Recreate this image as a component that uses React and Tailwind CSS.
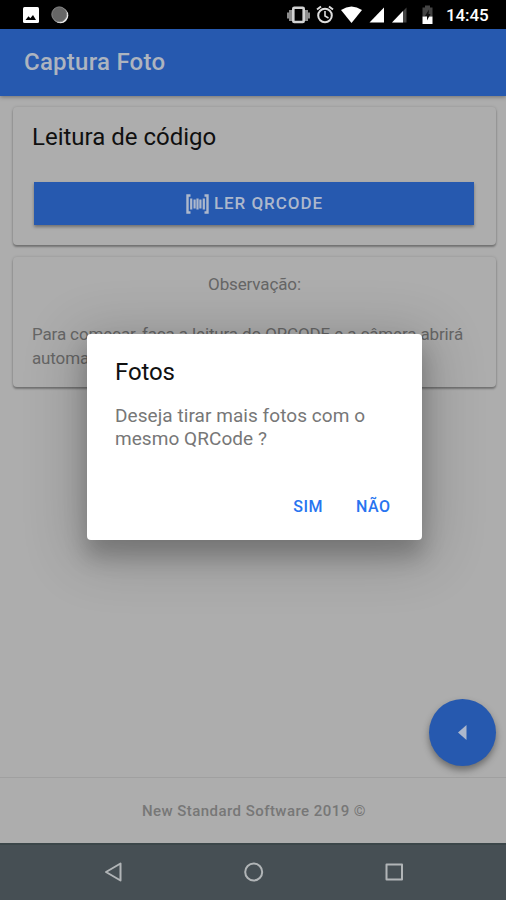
function StatusBar() {
  return (
    <div className="flex h-[29px] shrink-0 items-center bg-black pl-[23px] pr-[17px] text-white">
      <svg className="h-4 w-4" viewBox="0 0 16 16">
        <rect width="16" height="16" rx="1.5" fill="#fff" />
        <path d="M2.5 13 5.5 9.2 7.3 11.2 10 8 13 13Z" fill="#000" />
      </svg>
      <svg className="ml-3 h-[18px] w-[18px]" viewBox="0 0 18 18">
        <circle cx="9.5" cy="9.5" r="7.8" fill="#eee" />
        <circle cx="8.3" cy="8.4" r="7.5" fill="#666" stroke="#888" />
      </svg>
      <svg className="ml-auto h-[29px] w-[146px]" viewBox="0 0 146 29">
        <path d="M0 12.500h2v-2.500h4v11H2v-2.500H0ZM23 12.500h-2v-2.500h-4v11H21v-2.500h2Z" fill="#8c8c8c" />
        <rect x="6.3" y="7.800" width="10.400" height="14.200" rx="1" fill="none" stroke="#d2d2d2" strokeWidth="2.600" />
        <g fill="none" stroke="#dedede" strokeWidth="2">
          <circle cx="38" cy="15.500" r="6.800" />
          <path d="m30 9.500 4-3M46 9.500l-4-3" />
          <path d="M38 11v5l3.500 2" strokeWidth="1.600" />
        </g>
        <path d="M54 10Q64.500 3 75 10L64.500 23Z" fill="#fff" />
        <path d="M97 7.500V22.500H82.500Z" fill="#fff" />
        <path d="M119.500 7.500V22.500H105Z" fill="#444" />
        <path d="M116 11V22.500H105Z" fill="#fff" />
        <path d="M138 5.500h5v2h2.500v9h-10v-9H138Z" fill="#444" />
        <path d="M135.500 16.500h10V24h-10Z" fill="#fff" />
        <path d="m142 9.500-4 6.500h2v4.500l3.500-6.500h-2Z" fill="#111" />
      </svg>
      <span className="ml-[13px] w-[43px] whitespace-nowrap pt-px text-[17px] font-medium leading-none tracking-[-0.1px]">14:45</span>
    </div>
  );
}

function BarcodeIcon() {
  return (
    <svg className="h-5 w-[23px]" viewBox="0 0 23 20" fill="none" stroke="#adb8cc">
      <path d="M4.500 1.500H1.500V18.500H4.500M18.500 1.500H21.500V18.500H18.500" strokeWidth="2.400" />
      <path d="M5.200 4.500V15.500M8.600 5.500V14.500M11.500 4.500V15.500M14.400 5.500V14.500M17.800 4.500V15.500" strokeWidth="2.200" />
    </svg>
  );
}

function Dialog() {
  return (
    <div className="absolute left-[87px] top-[334px] flex h-[206px] w-[335px] flex-col rounded-[4px] bg-white px-7 pt-[23px] shadow-[0_16px_22px_1px_rgba(0,0,0,0.20),0_10px_55px_10px_rgba(0,0,0,0.19)]">
      <h2 className="text-[24px] leading-[30px] tracking-[-0.1px] text-[#101010]">Fotos</h2>
      <p className="mt-[18px] whitespace-nowrap text-[19px] leading-[22.500px] tracking-[0.06px] text-[#777]">
        Deseja tirar mais fotos com o<br />mesmo QRCode ?
      </p>
      <div className="mt-[45px] flex justify-end gap-[33px] pr-[3.500px] text-[16px] font-medium leading-6 tracking-[0.5px] text-[#2874f0]">
        <button>SIM</button>
        <button>NÃO</button>
      </div>
    </div>
  );
}

const cardShadow = "shadow-[0_2px_2px_rgba(0,0,0,0.30),0_0px_3px_rgba(0,0,0,0.16)]";

export default function App() {
  return (
    <div className="relative flex h-[900px] w-[506px] flex-col overflow-hidden bg-[#adadad] font-['Roboto',sans-serif]">
      <StatusBar />
      <header className="flex h-[67px] shrink-0 items-center bg-[#2659af] pb-px pl-6 shadow-[0_1px_4px_rgba(0,0,0,0.35)]">
        <h1 className="text-[24px] font-medium leading-none tracking-[0.25px] text-[#adb4bf]">Captura Foto</h1>
      </header>
      <main className="flex flex-1 flex-col gap-3 pl-[13px] pr-[10px] pt-[11px]">
        <section className={`h-[138px] rounded-[4px] bg-[#adadad] pl-[19px] pr-[22px] pt-[15px] ${cardShadow}`}>
          <h2 className="text-[24px] leading-[30px] text-[#101010]">Leitura de código</h2>
          <button className="ml-[2px] mt-[30px] flex h-[43px] w-[440px] items-center justify-center gap-[5px] bg-[#2659af] pl-px text-[17px] font-medium tracking-[0.95px] text-[#adb8cc] shadow-[0_2px_3px_rgba(0,0,0,0.35)]">
            <BarcodeIcon />
            LER QRCODE
          </button>
        </section>
        <section className={`h-[130px] rounded-[4px] bg-[#adadad] px-[19px] pt-[15px] text-[17px] leading-[24.500px] tracking-[-0.13px] text-[#666] ${cardShadow}`}>
          <p className="text-center">Observação:</p>
          <p className="mt-[25px] whitespace-nowrap">
            Para começar, faça a leitura do QRCODE e a câmera abrirá<br />automaticamente.
          </p>
        </section>
      </main>
      <footer className="flex h-[66px] shrink-0 items-center justify-center border-t border-[#a0a0a0] pl-[2px] pt-[2px] text-[15px] font-medium tracking-[0.45px] text-[#777]">
        New Standard Software 2019 ©
      </footer>
      <nav className="flex h-[57px] shrink-0 items-center border-t-2 border-[#3b4649] bg-[#464f54]">
        <svg className="h-[57px] w-[506px]" viewBox="0 0 506 57" fill="none" stroke="#b1b5b7" strokeWidth="2" strokeLinejoin="round">
          <path d="M120.500 19.500V36.500L106 28Z" />
          <circle cx="253.700" cy="28" r="8.500" />
          <rect x="386.500" y="20.500" width="15.500" height="15" />
        </svg>
      </nav>
      <button className="absolute left-[429px] top-[699px] flex h-[67px] w-[67px] items-center justify-center rounded-full bg-[#2659af] shadow-[0_4px_7px_rgba(0,0,0,0.38)]">
        <svg className="h-[15px] w-[9px]" viewBox="0 0 9 15"><path d="M8.500 0V15L0 7.500Z" fill="#adb8cc" /></svg>
      </button>
      <Dialog />
    </div>
  );
}
